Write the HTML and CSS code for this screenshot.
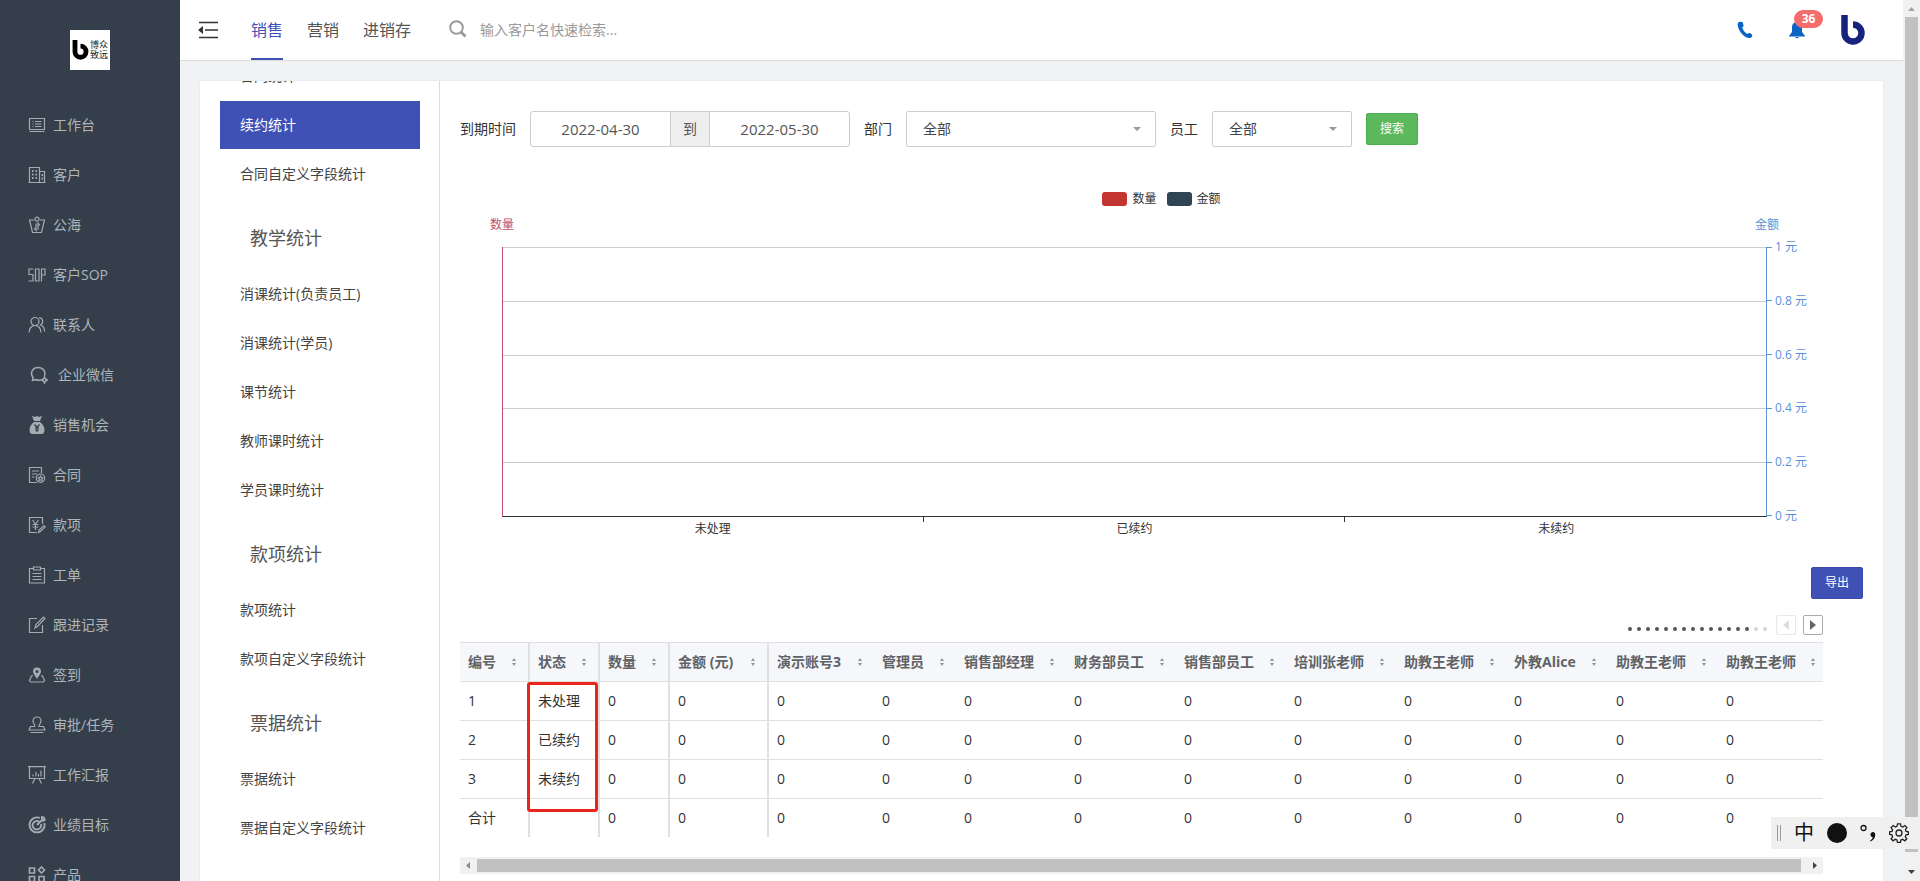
FILE: index.html
```
<!doctype html>
<html lang="zh-CN">
  <head>
    <meta charset="UTF-8" />
    <meta name="viewport" content="width=device-width, initial-scale=1.0" />
    <title>续约统计</title>
    <link rel="stylesheet" href="styles.css" />
  </head>
  <body>
    <aside class="sidebar">
      <a href="#" class="brand">
        <svg width="17" height="20" viewBox="0 0 24 29">
          <path d="M4 0v17a8 8 0 1 0 8-8" fill="none" stroke="#000" stroke-width="7" />
        </svg>
        <span>博众<br />致远</span>
      </a>
      <nav class="main-nav">
        <a href="#"><svg class="icon" viewBox="0 0 18 18"><path d="M1.500 2.500h15v11h-15zM4.500 5.500h1M7 5.500h6.500M4.500 8h1M7 8h6.500M4.500 10.500h1M7 10.500h6.500M1.500 15.500h15" /></svg>工作台</a>
        <a href="#"><svg class="icon" viewBox="0 0 18 18"><path d="M1.500 16.500v-15h10v15M11.500 5.500h5v11M.5 16.500h17" /><path d="M4 5h1.500M7.500 5H9M4 8.500h1.500M7.500 8.500H9M4 12h1.500M7.500 12H9M13.500 9h1.500M13.500 12.500h1.500" stroke-width="1.800" /></svg>客户</a>
        <a href="#"><svg class="icon" viewBox="0 0 18 18"><path d="M6 4H1.500l3 12.500h9l3-12.500H12M9 1.200a2 2 0 1 1 0 4 2 2 0 0 1 0-4M8 7.500v7L6 12M10 14v-7l2 2.500" /></svg>公海</a>
        <a href="#"><svg class="icon" viewBox="0 0 18 18"><path d="M5.500 3H1v5.500h4V15H.5M7.500 3H11v12H7.500zM13.500 15.600V3H17v6h-3.500" /></svg>客户SOP</a>
        <a href="#"><svg class="icon" viewBox="0 0 18 18"><path d="M7 1.500a4 4 0 1 1 0 8 4 4 0 0 1 0-8M1 16.500c0-4 2.500-7 6-7s6 3 6 7M11 2c4-.5 5 5 1.500 7 2.800 1 4 3.500 4 6.500" /></svg>联系人</a>
        <a href="#" class="wide"><svg class="icon" viewBox="0 0 18 18"><path d="M11 14c-2 .6-4 .4-5.500-.5L2.500 14.500l.5-3C-1 5.500 4 1.500 8 1.500c5 0 8 4 6.500 8.500M14.500 11l1 2 2 1-2 1-1 2-1-2-2-1 2-1z" stroke-width="1.500" /></svg>企业微信</a>
        <a href="#"><svg class="icon solid" viewBox="0 0 18 18"><path d="M4 0l3 1 2-1 2 1 3-1-2 5H6zM6 6h6c3 2 4.500 5 4.500 8 0 2.500-1 4-3 4h-9c-2 0-3-1.500-3-4 0-3 1.500-6 4.500-8z" /><path class="cut" d="M6.500 8.500L9 11.500l2.500-3M9 11.500V16M7 12h4M7 14h4" /></svg>销售机会</a>
        <a href="#"><svg class="icon" viewBox="0 0 18 18"><path d="M9 16.500H1.500v-15h12V7M4 5h7M4 8h5M4 11h2.500M12.500 8a4.200 4.200 0 1 1 0 8.400 4.200 4.200 0 0 1 0-8.400M12.500 10l.8 1.500 1.500.3-1 1.200.2 1.500-1.500-.7-1.500.7.200-1.500-1-1.200 1.500-.3z" /></svg>合同</a>
        <a href="#"><svg class="icon" viewBox="0 0 18 18"><path d="M9 16.500H1.500v-15h13V8M4.500 4l3 4 3-4M7.500 8v6M4.500 8.500h6M4.500 11h6M10.500 16.500l.5-2.500 5-4.500 1.200 1.500-5 4.500z" /></svg>款项</a>
        <a href="#"><svg class="icon" viewBox="0 0 18 18"><path d="M5 2.500H1.500v14.500h15V2.500H13M5.500 1h7v3h-7zM4.500 7.500h9M4.500 10.500h9M4.500 13.500h9" /></svg>工单</a>
        <a href="#"><svg class="icon" viewBox="0 0 18 18"><path d="M9 2.500H1.500v14h13V9M7 12l1-3.500 7.500-7.500 1.500 1.500L9.500 10.500z" /></svg>跟进记录</a>
        <a href="#"><svg class="icon solid" viewBox="0 0 18 18"><path fill-rule="evenodd" d="M9 1.500a4 4 0 0 1 4 4c0 2.500-2.500 4.500-4 7.500-1.500-3-4-5-4-7.500a4 4 0 0 1 4-4zm0 2.500a1.500 1.500 0 1 0 0 3 1.500 1.500 0 0 0 0-3z" /><path class="line" d="M5 9.500L3.500 10l-2 4.500 1 1.500h13l1-1.500-2-4.500-1.500-.5" /></svg>签到</a>
        <a href="#"><svg class="icon" viewBox="0 0 18 18"><path d="M7 10.500C7 8 5 7.500 5 5a4 4 0 1 1 8 0c0 2.500-2 3-2 5.500h4.500l1.500 3.500H1l1.500-3.500H7M2.500 16.500h13" /></svg>审批/任务</a>
        <a href="#"><svg class="icon" viewBox="0 0 18 18"><path d="M0 .7h18M1.500 1v11.500h15V1M5 10.500v-2M8 10.500V6M10.500 10.500V8M13 10.500v-6M7 12.500L4.500 17.500M11 12.500l2.500 5" /></svg>工作汇报</a>
        <a href="#"><svg class="icon" viewBox="0 0 18 18"><path d="M12 2a7.500 7.500 0 1 0 4.300 5M11 5.500a4.300 4.300 0 1 0 2 2.500M9 9l5-5V1l2 .8.700 2.200-2.500 1" stroke-width="1.900" /></svg>业绩目标</a>
        <a href="#"><svg class="icon" viewBox="0 0 18 18"><path d="M1.500 2h5v5h-5zM1.500 10.500h5v5h-5zM11 10.500h5v5h-5zM13.500 1l3 3-3 3-3-3z" stroke-width="1.700" /></svg>产品</a>
      </nav>
    </aside>

    <div class="page">
      <header class="topbar">
        <button type="button" class="icon-btn collapse" aria-label="收起菜单">
          <svg width="20" height="18" viewBox="0 0 20 18">
            <path d="M1 1.500h19M7 9h13M1 16.500h19" stroke="#333" stroke-width="1.500" fill="none" />
            <path d="M0 9l5-4v8z" fill="#333" />
          </svg>
        </button>
        <nav class="tabs">
          <a href="#" class="active">销售</a>
          <a href="#">营销</a>
          <a href="#">进销存</a>
        </nav>
        <form class="search">
          <svg width="18" height="18" viewBox="0 0 18 18">
            <circle cx="7.500" cy="7.500" r="6.300" fill="none" stroke="#999" stroke-width="1.900" />
            <path d="M12 12l4.500 4.500" stroke="#999" stroke-width="2.800" />
          </svg>
          <input type="text" aria-label="客户名" placeholder="输入客户名快速检索..." />
        </form>
        <div class="tools">
          <button type="button" class="icon-btn" aria-label="电话">
            <svg width="16" height="18" viewBox="0 0 16 18">
              <path d="M2.500.8C1 1 .5 2.500.8 4.500c.8 5.500 5.500 11.500 11 12.500 1.500.2 3-.5 3.500-2l-.3-1.500-2.800-1.800-2 1.200C8 12 6 9 5.200 6.500l1.500-1.700L5.500 1z" fill="#0b63c4" />
            </svg>
          </button>
          <button type="button" class="icon-btn bell" aria-label="消息">
            <svg width="16" height="18" viewBox="0 0 16 18">
              <path d="M8 1c3.500 0 5 2.500 5 5.500V11l3 4v.5H0V15l3-4V6.500C3 3.500 4.500 1 8 1zM6 16h4l-2 1.500z" fill="#0b63c4" />
            </svg>
            <span class="badge">36</span>
          </button>
          <a href="#" class="avatar" aria-label="账号">
            <svg width="24" height="30" viewBox="0 0 24 30">
              <path d="M3.500 0v18a8.500 8.500 0 1 0 8.500-8.500" fill="none" stroke="#17237c" stroke-width="6.500" />
            </svg>
          </a>
        </div>
      </header>

      <div class="content">
        <div class="card">
          <nav class="sub-nav">
            <a href="#">合同统计</a>
            <a href="#" class="active">续约统计</a>
            <a href="#">合同自定义字段统计</a>
            <h2>教学统计</h2>
            <a href="#">消课统计(负责员工)</a>
            <a href="#">消课统计(学员)</a>
            <a href="#">课节统计</a>
            <a href="#">教师课时统计</a>
            <a href="#">学员课时统计</a>
            <h2>款项统计</h2>
            <a href="#">款项统计</a>
            <a href="#">款项自定义字段统计</a>
            <h2>票据统计</h2>
            <a href="#">票据统计</a>
            <a href="#">票据自定义字段统计</a>
          </nav>

          <main class="report">
            <form class="filters">
              <label for="date-from">到期时间</label>
              <div class="date-range">
                <input type="text" id="date-from" value="2022-04-30" />
                <span>到</span>
                <input type="text" id="date-to" aria-label="结束时间" value="2022-05-30" />
              </div>
              <label for="dept">部门</label>
              <div class="select dept">
                <select id="dept"><option>全部</option></select>
              </div>
              <label for="staff">员工</label>
              <div class="select staff">
                <select id="staff"><option>全部</option></select>
              </div>
              <button type="button" class="btn btn-search">搜索</button>
            </form>

            <section class="chart">
              <div class="legend">
                <span><i class="red"></i>数量</span>
                <span><i class="navy"></i>金额</span>
              </div>
              <div class="axis-names"><span>数量</span><span>金额</span></div>
              <div class="chart-body">
                <div class="plot"><i></i><i></i><i></i><i></i><i></i></div>
                <ul class="y-axis">
                  <li>1 元</li>
                  <li>0.8 元</li>
                  <li>0.6 元</li>
                  <li>0.4 元</li>
                  <li>0.2 元</li>
                  <li>0 元</li>
                </ul>
              </div>
              <div class="x-axis"><span>未处理</span><span>已续约</span><span>未续约</span></div>
            </section>

            <div class="actions">
              <button type="button" class="btn btn-export">导出</button>
            </div>

            <section class="table-area">
              <div class="pager">
                <div class="dots">
                  <i></i><i></i><i></i><i></i><i></i><i></i><i></i><i></i><i></i><i></i><i></i><i></i><i></i><i></i><i class="off"></i><i class="off"></i>
                </div>
                <button type="button" class="prev" disabled aria-label="上一列"><svg width="6" height="10"><path d="M6 0v10L0 5z" /></svg></button>
                <button type="button" class="next" aria-label="下一列"><svg width="6" height="10"><path d="M0 0v10l6-5z" /></svg></button>
              </div>
              <table>
                <colgroup>
                  <col class="c70" /><col class="c70" /><col class="c70" /><col class="c99" /><col class="c105" /><col class="c82" />
                  <col class="c110" /><col class="c110" /><col class="c110" /><col class="c110" /><col class="c110" />
                  <col class="c102" /><col class="c110" /><col class="c105" />
                </colgroup>
                <thead>
                  <tr>
                    <th><div>编号<i></i></div></th>
                    <th><div>状态<i></i></div></th>
                    <th><div>数量<i></i></div></th>
                    <th><div>金额 (元)<i></i></div></th>
                    <th><div>演示账号3<i></i></div></th>
                    <th><div>管理员<i></i></div></th>
                    <th><div>销售部经理<i></i></div></th>
                    <th><div>财务部员工<i></i></div></th>
                    <th><div>销售部员工<i></i></div></th>
                    <th><div>培训张老师<i></i></div></th>
                    <th><div>助教王老师<i></i></div></th>
                    <th><div>外教Alice<i></i></div></th>
                    <th><div>助教王老师<i></i></div></th>
                    <th><div>助教王老师<i></i></div></th>
                  </tr>
                </thead>
                <tbody>
                  <tr><td>1</td><td>未处理</td><td>0</td><td>0</td><td>0</td><td>0</td><td>0</td><td>0</td><td>0</td><td>0</td><td>0</td><td>0</td><td>0</td><td>0</td></tr>
                  <tr><td>2</td><td>已续约</td><td>0</td><td>0</td><td>0</td><td>0</td><td>0</td><td>0</td><td>0</td><td>0</td><td>0</td><td>0</td><td>0</td><td>0</td></tr>
                  <tr><td>3</td><td>未续约</td><td>0</td><td>0</td><td>0</td><td>0</td><td>0</td><td>0</td><td>0</td><td>0</td><td>0</td><td>0</td><td>0</td><td>0</td></tr>
                  <tr><td>合计</td><td></td><td>0</td><td>0</td><td>0</td><td>0</td><td>0</td><td>0</td><td>0</td><td>0</td><td>0</td><td>0</td><td>0</td><td>0</td></tr>
                </tbody>
              </table>
              <div class="mark"></div>
              <div class="h-scroll">
                <svg width="17" height="17"><path d="M10 5v7L6 8.500z" fill="#8c8c8c" /></svg>
                <div class="thumb"></div>
                <svg width="22" height="17"><path d="M12 5v7l4-3.500z" fill="#404040" /></svg>
              </div>
            </section>
          </main>
        </div>
      </div>
    </div>

    <div class="v-scroll">
      <svg width="17" height="17"><path d="M5 11h7L8.500 7z" fill="#a3a3a3" /></svg>
      <div class="thumb"></div>
      <svg width="17" height="29"><path d="M5 18h7l-3.500 4z" fill="#404040" /></svg>
    </div>

    <div class="ime">
      <svg width="4" height="16"><path d="M.5 0v16M3.500 0v16" stroke="#999" /></svg>
      <span>中</span>
      <svg width="20" height="20"><circle cx="10" cy="10" r="10" fill="#111" /></svg>
      <svg width="16" height="20" viewBox="0 0 16 20">
        <circle cx="3.500" cy="5" r="2.500" fill="none" stroke="#111" stroke-width="1.300" />
        <path d="M12.500 9a2.700 2.700 0 0 1 2.700 3c0 3-2 5.500-5 6.500v-1c1.500-1 2.500-2 2.500-3.200a2.700 2.700 0 0 1-.2-5.300z" fill="#111" />
      </svg>
      <svg width="20" height="20" viewBox="0 0 20 20" fill="none" stroke="#222" stroke-width="1.300">
        <path d="M8.500.8h3l.5 2.500 1.700.7 2.200-1.500 2 2-1.500 2.300.7 1.600 2.300.4v2.600l-2.400.5-.7 1.700 1.500 2.200-2 2-2.200-1.500-1.700.7-.5 2.300h-3L8 17l-1.700-.7-2.200 1.500-2-2 1.500-2.200-.7-1.700-2.300-.5V8.800l2.400-.4.600-1.600L2.100 4.500l2-2L6.300 4 8 3.300z" />
        <circle cx="10" cy="10" r="3" />
      </svg>
    </div>
  </body>
</html>
```
FILE: styles.css
```
* {
  margin: 0;
  padding: 0;
  box-sizing: border-box;
}

body {
  display: flex;
  height: 100vh;
  overflow: hidden;
  font-family: 'Open Sans', 'Noto Sans CJK SC', sans-serif;
  font-size: 14px;
  line-height: 20px;
  color: #333;
  background: #f1f2f4;
}

a {
  color: inherit;
  text-decoration: none;
}

button,
input,
select {
  font: inherit;
  color: inherit;
}

svg {
  display: block;
  flex: none;
}

/* sidebar */
.sidebar {
  flex: none;
  width: 180px;
  padding-top: 30px;
  overflow: hidden;
  background: #343f4b;
}

.brand {
  display: flex;
  align-items: center;
  justify-content: center;
  gap: 1px;
  width: 40px;
  height: 40px;
  margin: 0 auto 30px;
  background: #fff;
  color: #222;
  font-size: 9px;
  line-height: 10px;
}

.main-nav a {
  display: flex;
  align-items: center;
  gap: 7px;
  height: 50px;
  padding-left: 28px;
  color: #b0b5ba;
}

.main-nav .wide {
  gap: 10px;
  padding-left: 30px;
}

.icon {
  width: 18px;
  height: 18px;
  fill: none;
  stroke: #a4abb1;
  stroke-width: 1.2;
}

.icon.solid {
  fill: #a4abb1;
  stroke: none;
}

.icon .line {
  fill: none;
  stroke: #a4abb1;
}

.icon .cut {
  fill: none;
  stroke: #343f4b;
}

/* top bar */
.page {
  flex: 1;
  display: flex;
  flex-direction: column;
  min-width: 0;
}

.topbar {
  flex: none;
  display: flex;
  align-items: center;
  height: 61px;
  padding: 0 38px 0 18px;
  background: #fff;
  border-bottom: 1px solid #d9dde0;
}

.icon-btn {
  position: relative;
  border: 0;
  background: none;
  cursor: pointer;
}

.tabs {
  display: flex;
  gap: 24px;
  margin-left: 33px;
  font-size: 16px;
  color: #555;
}

.tabs a {
  height: 60px;
  line-height: 60px;
}

.tabs .active {
  color: #3f51b5;
  border-bottom: 2px solid #3f51b5;
}

.search {
  display: flex;
  align-items: center;
  flex: 1;
  gap: 13px;
  margin-left: 38px;
}

.search svg {
  margin-bottom: 2px;
}

.search input {
  width: 240px;
  border: 0;
  outline: 0;
}

.search input::placeholder {
  color: #999;
}

.tools {
  display: flex;
  align-items: center;
  gap: 36px;
}

.badge {
  position: absolute;
  left: 5px;
  top: -11px;
  width: 29px;
  height: 18px;
  border-radius: 9px;
  background: #f56c6c;
  color: #fff;
  font-size: 12px;
  font-weight: 700;
  line-height: 18px;
}

/* card with report menu */
.content {
  flex: 1;
  min-height: 0;
  padding: 20px 20px 0;
}

.card {
  display: flex;
  height: 100%;
  overflow: hidden;
  background: #fff;
  box-shadow: 0 0 2px rgba(0, 0, 0, 0.08);
}

.sub-nav {
  flex: none;
  width: 240px;
  padding: 0 19px 0 20px;
  border-right: 1px solid #ddd;
  color: #444;
}

.sub-nav a {
  display: block;
  height: 48px;
  margin-bottom: 1px;
  padding-left: 20px;
  line-height: 48px;
}

/* list is scrolled down to the current report */
.sub-nav a:first-child {
  margin-top: -29px;
}

.sub-nav .active {
  background: #3f51b5;
  color: #fff;
}

.sub-nav h2 {
  height: 71px;
  padding: 8px 0 0 30px;
  font-size: 18px;
  font-weight: 400;
  line-height: 63px;
  color: #555;
}

.report {
  flex: 1;
  min-width: 0;
  padding: 30px 20px 0;
}

/* filters */
.filters {
  display: flex;
  align-items: center;
  gap: 14px;
}

.date-range {
  display: flex;
  width: 320px;
  height: 36px;
  border: 1px solid #ccc;
  border-radius: 3px;
  color: #555;
}

.date-range input {
  flex: 1;
  min-width: 0;
  border: 0;
  background: none;
  font-size: 15px;
  text-align: center;
}

.date-range span {
  width: 40px;
  border: solid #ccc;
  border-width: 0 1px;
  background: #eee;
  line-height: 34px;
  text-align: center;
}

.select {
  position: relative;
}

.select::after {
  content: '';
  position: absolute;
  right: 15px;
  top: 16px;
  border: 4px solid transparent;
  border-top-color: #999;
  border-bottom: 0;
}

.select select {
  appearance: none;
  width: 100%;
  height: 36px;
  padding: 0 16px;
  border: 1px solid #ccc;
  border-radius: 2px;
  background: #fff;
  color: #444;
}

.dept {
  width: 250px;
}

.staff {
  width: 140px;
}

.btn {
  width: 52px;
  height: 32px;
  border: 1px solid;
  border-radius: 2px;
  color: #fff;
  font-size: 12px;
  cursor: pointer;
}

.btn-search {
  background: #5cb85c;
  border-color: #4cae4c;
}

.btn-export {
  background: #3f51b5;
  border-color: #3a4bab;
}

/* chart */
.chart {
  padding: 42px 56px 0 42px;
  font-size: 12px;
}

.legend {
  display: flex;
  justify-content: center;
  gap: 10px;
  margin-left: 14px;
}

.legend span {
  display: flex;
  align-items: center;
  gap: 5px;
}

.legend i {
  width: 25px;
  height: 14px;
  border-radius: 3px;
}

.red {
  background: #c23531;
}

.navy {
  background: #2f4554;
}

.axis-names {
  display: flex;
  justify-content: space-between;
  margin: 6px 28px 12px -12px;
  color: #5a8fd8;
}

.axis-names span:first-child {
  color: #c2506a;
}

.chart-body {
  display: flex;
  height: 270px;
}

.plot {
  flex: 1;
  display: flex;
  flex-direction: column;
  border-left: 1px solid #c2506a;
  border-right: 1px solid #5b93d3;
  border-bottom: 1px solid #333;
}

.plot i {
  flex: 1;
  border-top: 1px solid #ccc;
}

.y-axis {
  display: flex;
  flex-direction: column;
  justify-content: space-between;
  width: 40px;
  margin: -10px 0 -9px;
  list-style: none;
  color: #5a8fd8;
}

.y-axis li {
  display: flex;
  align-items: center;
  gap: 3px;
  white-space: nowrap;
}

.y-axis li::before {
  content: '';
  width: 5px;
  height: 1px;
  background: #5b93d3;
}

.x-axis {
  display: flex;
  margin-right: 40px;
}

.x-axis span {
  flex: 1;
  padding-top: 2px;
  text-align: center;
  background: linear-gradient(#333, #333) right top / 1px 5px no-repeat;
}

.x-axis span:last-child {
  background: none;
}

.actions {
  display: flex;
  justify-content: flex-end;
  padding-top: 28px;
}

/* table */
.table-area {
  position: relative;
  margin: 16px 40px 0 0;
}

.pager {
  display: flex;
  justify-content: flex-end;
  gap: 7px;
  height: 20px;
  margin-bottom: 7px;
}

.dots {
  display: flex;
  gap: 5px;
  padding: 12px 2px 0 0;
}

.dots i {
  width: 4px;
  height: 4px;
  border-radius: 50%;
  background: #555;
}

.dots .off {
  background: #d5d5d5;
}

.pager button {
  display: flex;
  align-items: center;
  justify-content: center;
  width: 20px;
  height: 20px;
  border: 1px solid #aaa;
  border-radius: 2px;
  background: #fff;
  fill: #666;
}

.pager .prev {
  border-color: #e8e8e8;
  fill: #ddd;
}

table {
  width: 100%;
  table-layout: fixed;
  border-spacing: 0;
}

.c70 {
  width: 70px;
}

.c82 {
  width: 82px;
}

.c99 {
  width: 99px;
}

.c102 {
  width: 102px;
}

.c105 {
  width: 105px;
}

.c110 {
  width: 110px;
}

th,
td {
  height: 39px;
  padding-left: 8px;
  border-top: 1px solid #e0e0e0;
  text-align: left;
  white-space: nowrap;
}

th {
  background: #f5f7fa;
  color: #606266;
}

th:nth-child(-n + 4),
td:nth-child(-n + 4) {
  border-right: 2px solid #e0e0e0;
}

th div {
  display: flex;
  align-items: center;
  justify-content: space-between;
  padding-right: 12px;
}

th:last-child div {
  padding-right: 8px;
}

th i {
  width: 4px;
  height: 8px;
}

th i::before,
th i::after {
  content: '';
  display: block;
  border: solid transparent;
  border-width: 0 2px 3px;
  border-bottom-color: #909399;
}

th i::after {
  margin-top: 2px;
  border-width: 3px 2px 0;
  border-top-color: #909399;
}

.mark {
  position: absolute;
  left: 67px;
  top: 67px;
  width: 71px;
  height: 130px;
  border: 3px solid #e8261c;
  border-radius: 3px;
}

/* scroll bars */
.h-scroll {
  display: flex;
  height: 17px;
  margin-top: 20px;
  background: #f1f1f1;
}

.thumb {
  flex: 1;
  background: #c1c1c1;
}

.h-scroll .thumb {
  margin: 2px 0;
}

.v-scroll {
  flex: none;
  display: flex;
  flex-direction: column;
  width: 17px;
  background: #f1f1f1;
}

.v-scroll .thumb {
  margin: 0 2px;
}

/* input method bar floating over the page */
.ime {
  position: fixed;
  right: 0;
  bottom: 32px;
  display: flex;
  align-items: center;
  gap: 13px;
  height: 32px;
  padding: 0 11px 0 6px;
  background: #f0f0f0;
  color: #111;
  font-size: 20px;
}
```
